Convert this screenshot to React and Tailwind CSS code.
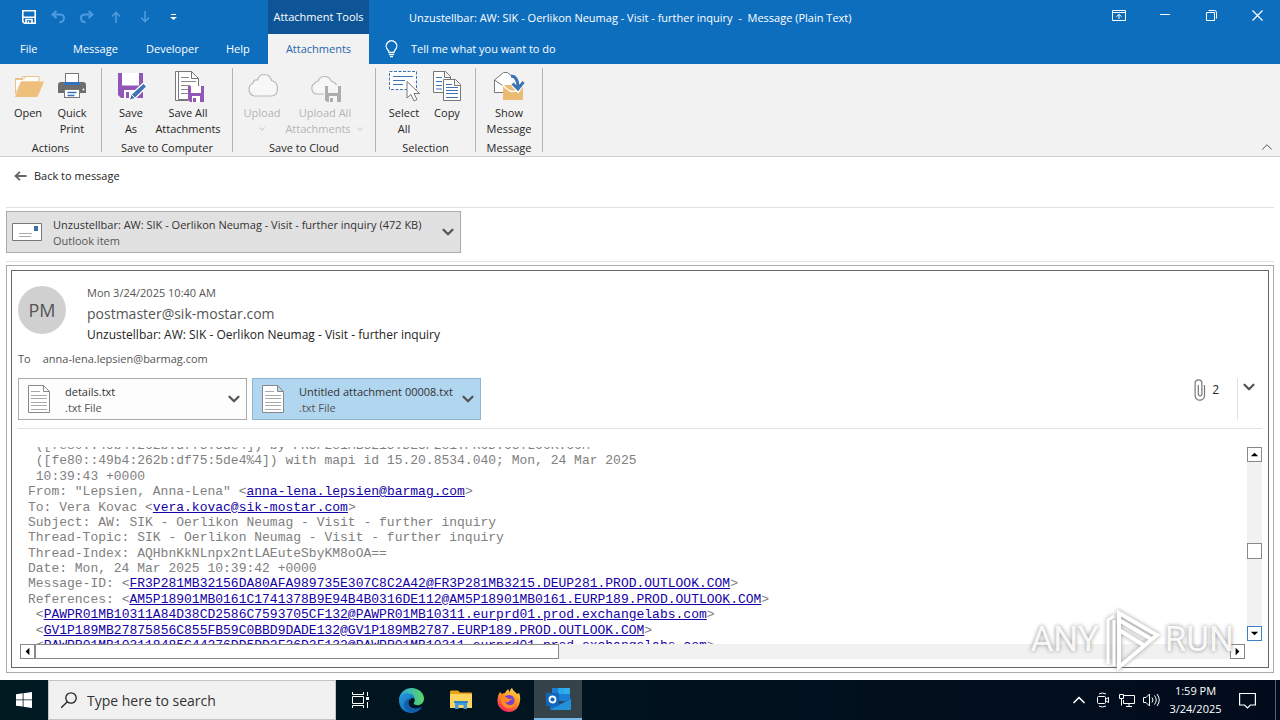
import { ChevronDown, ChevronUp } from "lucide-react";

const SaveIcon = () => (
  <svg width="14" height="14" viewBox="0 0 14 14" fill="none" stroke="white">
    <path d="M.8 .8h12.4v12.4H2.4L.8 11.6z" strokeWidth="1.6" />
    <path d="M1 7.2h12M4 13V9.5h6V13" strokeWidth="1.6" />
    <path d="M6.5 11v2" />
  </svg>
);

const UndoIcon = () => (
  <svg width="14" height="14" viewBox="0 0 14 14" fill="none" stroke="currentColor" strokeWidth="2">
    <path d="M5.5 1L1.5 4.5l4 3.500M2 4.500h7c2.500 0 4 1.500 4 3.500s-1.500 4-4.500 4.500" />
  </svg>
);

const RedoIcon = () => (
  <svg width="14" height="14" viewBox="0 0 14 14" fill="none" stroke="currentColor" strokeWidth="2">
    <path d="M8.500 1l4 3.500-4 3.500M12 4.500H5C2.500 4.500 1 6 1 8s1.500 4 4.500 4.500" />
  </svg>
);

const UpIcon = () => (
  <svg width="10" height="12" viewBox="0 0 10 12" fill="none" stroke="currentColor" strokeWidth="1.6">
    <path d="M5 12V1.500M1 5.500l4-4 4 4" />
  </svg>
);

const DownIcon = () => (
  <svg width="10" height="12" viewBox="0 0 10 12" fill="none" stroke="currentColor" strokeWidth="1.6">
    <path d="M5 0v10.500M1 6.500l4 4 4-4" />
  </svg>
);

const OpenIcon = () => (
  <svg width="32" height="32" viewBox="0 0 32 32">
    <path d="M3.500 24V8.500h7V6.500h16V11" fill="#fff" stroke="#e8c48a" />
    <path d="M3.500 8v16L9 12h18V6.500H14l-3 3H3.500z" fill="#fdfdfd" stroke="#e8c48a" />
    <path d="M9.500 11.500H32L25.500 27H3z" fill="#eec07b" />
  </svg>
);

const PrintIcon = () => (
  <svg width="32" height="32" viewBox="0 0 32 32">
    <rect x="9.500" y="3.500" width="13" height="10" fill="#fff" stroke="#777" />
    <path d="M2 15q0-3 3-3h3v3h16v-3h3q3 0 3 3v8H2z" fill="#6d6d6d" />
    <rect x="8" y="12" width="16" height="3" fill="#3571ba" />
    <circle cx="27.500" cy="19.500" r="1" fill="#fff" />
    <rect x="8.500" y="19.500" width="15" height="8" fill="#fff" stroke="#777" />
    <path d="M11.500 22.500h9M11.500 25.500h7" stroke="#3571ba" strokeWidth="1.400" />
  </svg>
);

const SaveAsIcon = () => (
  <svg width="32" height="32" viewBox="0 0 32 32">
    <path d="M3 3h25v25H6l-3-3z" fill="#9256b8" />
    <path d="M7 3h17v12.500H7zM9 20h12v8H9z" fill="#fff" />
    <rect x="11" y="22" width="3" height="6" fill="#9256b8" />
    <path d="M14 30.500l2-6L28.500 13l3.500 3.500L20 28.500z" fill="#3f74b4" stroke="#fff" strokeWidth="1.300" />
    <path d="M17 25l3 3" stroke="#fff" />
  </svg>
);

const SaveAllIcon = () => (
  <svg width="32" height="32" viewBox="0 0 32 32">
    <path d="M16 30.500H3.500V1.500h12" fill="#fff" stroke="#777" />
    <path d="M6.500 29.500v-28h13l7 7v21z" fill="#fff" stroke="#777" />
    <path d="M19.500 1.500v7h7" fill="none" stroke="#777" />
    <path d="M9 7.500h8M9 11.500h15M9 15.500h9M9 19.500h7M9 23.500h7" stroke="#8a8a8a" />
    <path d="M16 16h16v16H18l-2-2z" fill="#9256b8" />
    <path d="M19 16h10v7H19zM20 26h8v6h-8z" fill="#fff" />
    <rect x="21" y="28" width="3" height="4" fill="#9256b8" />
  </svg>
);

const CloudIcon = () => (
  <svg width="32" height="32" viewBox="0 0 32 32">
    <path d="M8 26a7 7 0 0 1-1-13q1-4 4.500-3Q13 4.500 18 4.500q6 0 7.500 6 6 1.500 6 8Q31.500 26 25 26z" fill="#f7f7f7" stroke="#b9b9b9" strokeWidth="1.200" />
  </svg>
);

const CloudAllIcon = () => (
  <svg width="32" height="32" viewBox="0 0 32 32">
    <path d="M15 24H7a6 6 0 0 1-1-11q1-2 3.500-2 1-4.500 6-4.500t7 5q3.500.500 5 3.500" fill="#f7f7f7" stroke="#b9b9b9" strokeWidth="1.200" />
    <path d="M16 16h16v16H18l-2-2z" fill="#adadad" />
    <path d="M19 16h10v7H19zM20 26h8v6h-8z" fill="#f5f5f5" />
    <rect x="21" y="28" width="3" height="4" fill="#adadad" />
  </svg>
);

const SelectIcon = () => (
  <svg width="32" height="32" viewBox="0 0 32 32">
    <rect x="1.500" y="1.500" width="27" height="18" fill="#fff" stroke="#3f74b4" strokeDasharray="3 1.500" />
    <path d="M5 6.500h20M5 10.500h12M5 14.500h10" stroke="#3f74b4" />
    <path d="M19 11.500V28l4-3.500 3 6.500 3-1.500-3-6h5.500z" fill="#fff" stroke="#777" />
  </svg>
);

const CopyIcon = () => (
  <svg width="32" height="32" viewBox="0 0 32 32" fill="#fff" stroke="#777">
    <path d="M2.500 1.500h12l5 5v16h-17zM13.500 1.500v6h6" />
    <path d="M5 7.500h6M5 11.500h6M5 15.500h6M5 19h6" stroke="#3f74b4" />
    <path d="M12.500 9.500h12l5 5v16h-17zM23.500 9.500v6h6" />
    <path d="M15 14.500h6M15 17.500h12M15 20.500h12M15 23.500h12M15 27.500h12" stroke="#3f74b4" />
  </svg>
);

const ShowIcon = () => (
  <svg width="32" height="32" viewBox="0 0 32 32">
    <path d="M1.500 22.500V10l9-7.500h4L22 9v13.500z" fill="#fff" stroke="#777" />
    <path d="M1.500 10l8 5.500" stroke="#777" fill="none" />
    <path d="M10 15h20v15H10z" fill="#ebbb73" />
    <path d="M10 15q10 13 20 0" fill="none" stroke="#fff" strokeWidth="1.300" />
    <path d="M18 6q7 0 7 13M20 14l5 5.500 5-7" fill="none" stroke="#fff" strokeWidth="5" />
    <path d="M18 6q7 0 7 12M19.500 13.500l5.500 5.500 5.500-7" fill="none" stroke="#3f74b4" strokeWidth="3" />
  </svg>
);

const groups = [
  { label: "Actions", pad: "pl-[6px] pr-[7px]", items: [
    { icon: OpenIcon, lines: ["Open"], width: "w-[44px]" },
    { icon: PrintIcon, lines: ["Quick", "Print"], width: "w-[44px]" },
  ] },
  { label: "Save to Computer", pad: "pl-[7px] pr-[9px]", items: [
    { icon: SaveAsIcon, lines: ["Save", "As"], width: "w-[44px]" },
    { icon: SaveAllIcon, lines: ["Save All", "Attachments"], width: "w-[70px]" },
  ] },
  { label: "Save to Cloud", pad: "px-[8px]", disabled: true, items: [
    { icon: CloudIcon, lines: ["Upload", ""], width: "w-[42px]", arrow: true },
    { icon: CloudAllIcon, lines: ["Upload All", "Attachments"], width: "w-[84px]", arrow: true },
  ] },
  { label: "Selection", pad: "pl-[6px] pr-[7px]", items: [
    { icon: SelectIcon, lines: ["Select", "All"], width: "w-[44px]" },
    { icon: CopyIcon, lines: ["Copy"], width: "w-[42px]" },
  ] },
  { label: "Message", pad: "", items: [
    { icon: ShowIcon, lines: ["Show", "Message"], width: "w-[66px]" },
  ] },
];

const RibbonGroup = ({ group }) => (
  <div className="flex">
    <div className="flex flex-col justify-between">
      <div className={`flex pt-[2px] ${group.pad}`}>
        {group.items.map(({ icon: Icon, lines, width, arrow }) => (
          <button key={lines[0]} disabled={group.disabled}
            className={`flex flex-col items-center gap-[3px] leading-4 whitespace-nowrap disabled:text-[#b5b5b5] ${width}`}>
            <Icon />
            <span className="flex flex-col items-center">
              <span>{lines[0]}</span>
              {lines.length > 1 && (
                <span className="flex h-4 items-center gap-1">
                  {lines[1]}
                  {arrow && <ChevronDown size={10} />}
                </span>
              )}
            </span>
          </button>
        ))}
      </div>
      <span className="text-center leading-4 whitespace-nowrap">{group.label}</span>
    </div>
    <div className="mb-1 w-px bg-[#b5b5b5]" />
  </div>
);

const headers = [
  { text: " ([fe80::49b4:262b:df75:5de4]) by FR3P281MB3215.DEUP281.PROD.OUTLOOK.COM" },
  { text: " ([fe80::49b4:262b:df75:5de4%4]) with mapi id 15.20.8534.040; Mon, 24 Mar 2025" },
  { text: " 10:39:43 +0000" },
  { text: 'From: "Lepsien, Anna-Lena" ', link: "anna-lena.lepsien@barmag.com" },
  { text: "To: Vera Kovac ", link: "vera.kovac@sik-mostar.com" },
  { text: "Subject: AW: SIK - Oerlikon Neumag - Visit - further inquiry" },
  { text: "Thread-Topic: SIK - Oerlikon Neumag - Visit - further inquiry" },
  { text: "Thread-Index: AQHbnKkNLnpx2ntLAEuteSbyKM8oOA==" },
  { text: "Date: Mon, 24 Mar 2025 10:39:42 +0000" },
  { text: "Message-ID: ", link: "FR3P281MB32156DA80AFA989735E307C8C2A42@FR3P281MB3215.DEUP281.PROD.OUTLOOK.COM" },
  { text: "References: ", link: "AM5P18901MB0161C1741378B9E94B4B0316DE112@AM5P18901MB0161.EURP189.PROD.OUTLOOK.COM" },
  { text: " ", link: "PAWPR01MB10311A84D38CD2586C7593705CF132@PAWPR01MB10311.eurprd01.prod.exchangelabs.com" },
  { text: " ", link: "GV1P189MB27875856C855FB59C0BBD9DADE132@GV1P189MB2787.EURP189.PROD.OUTLOOK.COM" },
  { text: " ", link: "PAWPR01MB103118485C44276DD5DD2F26D2F132@PAWPR01MB10311.eurprd01.prod.exchangelabs.com" },
];

const TextFileIcon = () => (
  <svg width="22" height="28" viewBox="0 0 22 28" fill="#fff" stroke="#888">
    <path d="M.5 .5h15l6 6v21H.5zM15.500 .5v6h6" />
    <path d="M3 6.500h9M3 10.500h16M3 13.500h16M3 17.500h16M3 20.500h16M3 24.500h16" stroke="#aaa" />
  </svg>
);

const Attachment = ({ name, selected }) => (
  <button className={`flex h-[42px] w-[229px] items-center border text-left leading-4 whitespace-nowrap ${selected ? "border-[#8fb4cf] bg-[#b1d6f0]" : "border-[#ababab] bg-[#fdfdfd]"}`}>
    <span className="mr-[15px] ml-[9px]"><TextFileIcon /></span>
    <span className="flex-1 pt-[2px] text-[#333]">
      <span className="block">{name}</span>
      <span className="block text-[#555]">.txt File</span>
    </span>
    <ChevronDown size={18} strokeWidth={3} className="mr-[3px] shrink-0 text-[#555]" />
  </button>
);

const arrows = {
  up: "M3 9h8L7 5z",
  down: "M3 5h8L7 9z",
  left: "M9 3v8L5 7z",
  right: "M5 3v8l4-4z",
};

const ScrollButton = ({ dir, active }) => (
  <button aria-label={`Scroll ${dir}`} className={`flex size-[15px] shrink-0 items-center justify-center border bg-white ${active ? "border-[#3f7fc4]" : "border-[#888]"}`}>
    <svg width="13" height="13" viewBox="0 0 14 14"><path d={arrows[dir]} /></svg>
  </button>
);

const Watermark = () => (
  <div className="pointer-events-none absolute right-[34px] bottom-[-6px] flex items-center gap-[5px] font-['Roboto',sans-serif] text-[35px] leading-[66px] text-white/90 [text-shadow:0_0_4px_#888]">
    <span>ANY</span>
    <svg width="56" height="64" viewBox="0 0 56 64" fill="none" stroke="#fff" strokeWidth="4" className="drop-shadow-[0_0_2px_#999]">
      <path d="M15 5L53 27 15 59zM15 12l32 19M15 22l26 16" />
      <path d="M10 8l-6 4v44M10 12v46" strokeWidth="3" />
    </svg>
    <span>RUN</span>
  </div>
);

const EdgeIcon = () => (
  <svg width="25" height="25" viewBox="0 0 24 24">
    <defs>
      <linearGradient id="edgeTop" x1="0" x2="1"><stop offset="0" stopColor="#2aa5e0" /><stop offset="1" stopColor="#5bd668" /></linearGradient>
      <linearGradient id="edgeLow" x1="0" x2="1" y2="1"><stop offset="0" stopColor="#249fe0" /><stop offset="1" stopColor="#0c4f9e" /></linearGradient>
    </defs>
    <path d="M0 11C1 4 6 0 12 0c7 0 12 5 12 10 0 4-3 6.500-6.500 6.500-2.500 0-4-1-3-2.500 2-3-.5-6-4-6C5 8 1 10 0 11z" fill="url(#edgeTop)" />
    <path d="M0 12c0-5 4-7 8-7 5 0 7 3 7 5-4-1.500-6 1-6 4 0 5 6 8 13 4-2 4-6 6-10 6C5 24 0 19 0 12z" fill="url(#edgeLow)" />
    <path d="M9 13c-1 5 5 9 12.500 5.500C16 26 4 23 5 15c.5-3 4-5 7-4.500-2 .5-3 1.500-3 2.500z" fill="#135eac" />
  </svg>
);

const FolderIcon = () => (
  <svg width="22" height="20" viewBox="0 0 22 20">
    <path d="M0 2q0-1.500 1-1.500h7l2 2h11q1 0 1 1V17H0z" fill="#e8a317" />
    <path d="M0 4h22v14H0z" fill="#fcd462" />
    <path d="M5 11h12v8h-3.500v-4h-5v4H5z" fill="#3f9bdc" />
    <path d="M4 11h14v2H4z" fill="#2b85c9" />
  </svg>
);

const FirefoxIcon = () => (
  <svg width="24" height="24" viewBox="0 0 24 24">
    <defs>
      <linearGradient id="fox" x1=".8" y1="0" x2=".3" y2="1"><stop offset="0" stopColor="#ffe14a" /><stop offset=".5" stopColor="#ff8a28" /><stop offset="1" stopColor="#f5205e" /></linearGradient>
    </defs>
    <path d="M3 4l2 2c1-.5 2-1 3-1 1-2 2-3 3.500-4 0 1.500.500 2 1.500 3 0-2 .5-3 2-4 1 3 4 4 5 6l2-1c1 2 1.500 5 1 8C22 20 17.500 24 12 24S1 20 .5 14C.3 10 1 7 3 4z" fill="url(#fox)" />
    <circle cx="12" cy="12.500" r="5.500" fill="#7a3fd0" />
    <path d="M4 10c3-2 6-1 8 1l4-.5c-1 1-2 1.500-3.500 2 0 2-3 2-4.500 1 1 3 5 5 9 2 1-1 1-3 .5-5 2 3 2 9-5 10-5 0-9-4-8.500-10.500z" fill="#ff8c22" />
  </svg>
);

const OutlookIcon = () => (
  <svg width="25" height="24" viewBox="0 0 25 24">
    <rect x="6" y="1" width="18" height="13" fill="#1a7fd4" />
    <path d="M12 1h6v6h-6z" fill="#28a8ea" />
    <path d="M18 1h6v6h-6z" fill="#50d9ff" opacity=".5" />
    <path d="M4 12l10 5 11-6v12H4z" fill="#1270bf" />
    <path d="M4 23l21-11v11z" fill="#2590d8" />
    <rect y="6" width="13" height="13" rx="1" fill="#0f66bd" />
    <circle cx="6.500" cy="12.500" r="3" fill="none" stroke="#fff" strokeWidth="1.800" />
  </svg>
);

const TitleBar = () => (
  <div className="flex h-[34px] items-stretch bg-[#0e6ebe] text-white">
    <div className="flex w-[268px] items-center pl-[22px] text-[#4f9add]">
      <button aria-label="Save" className="mr-[15px]"><SaveIcon /></button>
      <button aria-label="Undo" className="mr-[15px]"><UndoIcon /></button>
      <button aria-label="Redo" className="mr-[17px]"><RedoIcon /></button>
      <button aria-label="Previous" className="mr-[19px]"><UpIcon /></button>
      <button aria-label="Next" className="mr-[20px]"><DownIcon /></button>
      <button aria-label="Customize toolbar">
        <svg width="7" height="8" viewBox="0 0 7 8" fill="white"><path d="M1 1h5v1H1zM0 4h7L3.500 7z" /></svg>
      </button>
    </div>
    <div className="flex w-[101px] items-center justify-center bg-[#0d5596] whitespace-nowrap">Attachment Tools</div>
    <h1 className="ml-10 flex-1 leading-9 whitespace-pre">Unzustellbar: AW: SIK - Oerlikon Neumag - Visit - further inquiry  -  Message (Plain Text)</h1>
    <div className="flex h-[30px] items-center">
      <button aria-label="Ribbon display" className="flex w-[46px] justify-center">
        <svg width="14" height="11" viewBox="0 0 14 11" fill="none" stroke="white"><path d="M.5 .5h13v10H.5zM1 2.500h12M7 9V4.500M4.500 6.500L7 4.500l2.500 2" /></svg>
      </button>
      <button aria-label="Minimize" className="flex w-[46px] justify-center">
        <svg width="10" height="10" viewBox="0 0 10 10" stroke="white"><path d="M0 4.500h10" /></svg>
      </button>
      <button aria-label="Restore" className="flex w-[46px] justify-center">
        <svg width="11" height="11" viewBox="0 0 11 11" fill="none" stroke="white"><path d="M.5 2.500h8v8h-8zM2.500 .5h6q2 0 2 2v6" /></svg>
      </button>
      <button aria-label="Close" className="flex w-[46px] justify-center">
        <svg width="11" height="11" viewBox="0 0 11 11" stroke="white" strokeWidth="1.200"><path d="M.5 .5l10 10M10.500 .5l-10 10" /></svg>
      </button>
    </div>
  </div>
);

const Tabs = () => (
  <nav className="flex h-[30px] items-center bg-[#0e6ebe] text-white">
    <a href="#file" className="w-[53px] pl-[20px]">File</a>
    <a href="#message" className="w-[73px] pl-[20px]">Message</a>
    <a href="#developer" className="w-[80px] pl-[20px]">Developer</a>
    <a href="#help" className="w-[62px] pl-[20px]">Help</a>
    <a href="#attachments" className="flex h-full w-[101px] items-center justify-center bg-[#f2f2f2] text-[#1f66ad]">Attachments</a>
    <label htmlFor="tellme" className="mr-[13px] ml-[16px]">
      <svg width="13" height="18" viewBox="0 0 13 18" fill="none" stroke="white" strokeWidth="1.300">
        <path d="M4 12.500Q4 11 2.500 9.500A5.300 5.300 0 1 1 10.500 9.500Q9 11 9 12.500zM4 14.700h5M5 16.700h3" />
      </svg>
    </label>
    <input id="tellme" aria-label="Tell me what you want to do" placeholder="Tell me what you want to do" className="w-[220px] bg-transparent outline-none placeholder:text-white" />
  </nav>
);

const Taskbar = () => (
  <footer className="flex h-10 shrink-0 items-stretch bg-linear-to-r from-[#001a22] to-[#020b1c] text-white">
    <button aria-label="Start" className="flex w-12 items-center justify-center">
      <svg width="16" height="16" viewBox="0 0 16 16" fill="white"><path d="M0 2.300L6.700 1.300v6.200H0zM7.500 1.200L16 0v7.500H7.500zM0 8.300h6.700v6.300L0 13.700zM7.500 8.300H16V16l-8.500-1.200z" /></svg>
    </button>
    <div className="flex w-[288px] items-center border border-[#c4c4c4] bg-[#f1f1f1] pl-[12px]">
      <svg width="16" height="16" viewBox="0 0 16 16" fill="none" stroke="#222" strokeWidth="1.300"><circle cx="10" cy="6" r="5.200" /><path d="M6.300 9.700L0 16" /></svg>
      <input aria-label="Type here to search" placeholder="Type here to search" className="ml-[10px] w-[200px] bg-transparent text-[14px] outline-none placeholder:text-[#333]" />
    </div>
    <button aria-label="Task view" className="flex w-12 items-center justify-center">
      <svg width="17" height="16" viewBox="0 0 17 16" fill="none" stroke="white"><path d="M.5 0v2.500h11V0M.5 4.500h11v7H.5zM.5 16v-2.500h11V16M15.500 0v4M15.500 10v6" /><path d="M14 5h3v3h-3z" fill="white" stroke="none" /></svg>
    </button>
    <button aria-label="Edge" className="flex w-[54px] items-center justify-center"><EdgeIcon /></button>
    <button aria-label="File Explorer" className="flex w-[45px] items-center justify-center"><FolderIcon /></button>
    <button aria-label="Firefox" className="flex w-[51px] items-center justify-center"><FirefoxIcon /></button>
    <button aria-label="Outlook" className="flex w-12 items-center justify-center border-b-2 border-[#76b9ed] bg-[#35434b]"><OutlookIcon /></button>
    <div className="flex-1" />
    <div className="flex items-center gap-2 leading-[18px]">
      <ChevronUp size={20} strokeWidth={2} className="-mr-[2px]" />
      <svg width="16" height="16" viewBox="0 0 16 16" fill="none" stroke="white"><rect x="2.500" y="4.500" width="8" height="7" rx="1" /><path d="M11 7l2.500-1.500v5L11 9M4 2q3-2 7 0M4 14q3 2 7 0" /></svg>
      <svg width="16" height="16" viewBox="0 0 16 16" fill="none" stroke="white"><path d="M5 3.500h10.500v8h-11V8M7 14.500h6M10 12v2.500M.5 2.500h4v4h-4zM2.500 6.500v7" /></svg>
      <svg width="17" height="16" viewBox="0 0 17 16" fill="none" stroke="white"><path d="M.5 5.500h2.500L6.500 2v12L3 10.500H.5zM9 5.500q2 2.500 0 5M11.500 3.500q3.500 4.500 0 9M14 2q4.500 6 0 12" /></svg>
      <time className="w-[55px] text-center whitespace-nowrap">1:59 PM<br />3/24/2025</time>
      <button aria-label="Notifications" className="mr-[19px] ml-[8px]">
        <svg width="17" height="17" viewBox="0 0 17 17" fill="none" stroke="white" strokeWidth="1.200"><path d="M.6 1.500h15.800v11.500h-5L8.500 16l-3-3H.6z" /></svg>
      </button>
    </div>
    <div className="mr-1 w-px bg-[#59636d]" />
  </footer>
);

export default function App() {
  return (
    <div className="flex h-screen flex-col overflow-hidden bg-white font-['Open_Sans',sans-serif] text-[11px] text-[#262626]">
      <TitleBar />
      <Tabs />
      <div className="flex h-[93px] shrink-0 items-stretch border-b border-[#cfcfcf] bg-[#f2f2f2] pt-1">
        {groups.map((group) => <RibbonGroup key={group.label} group={group} />)}
        <button aria-label="Collapse ribbon" className="mt-auto mr-[4px] ml-auto"><ChevronUp size={18} strokeWidth={1} /></button>
      </div>

      <main className="flex min-h-0 flex-1 flex-col px-[6px] pb-[7px]">
        <div className="h-[51px] shrink-0 border-b border-[#e1e1e1] pt-[10px] pl-[8px]">
          <a href="#back" className="flex items-center gap-[7px] leading-[18px]">
            <svg width="13" height="10" viewBox="0 0 13 10" fill="none" stroke="#666" strokeWidth="1.800"><path d="M12.500 5H2M6 .8L1.500 5 6 9.200" /></svg>
            Back to message
          </a>
        </div>
        <div className="shrink-0 border-b border-[#e1e1e1] pt-[3px] pb-[8px]">
          <button className="flex h-[42px] w-[455px] items-center border border-[#ababab] bg-[#e1e1e1] text-left leading-4 whitespace-nowrap">
            <svg width="30" height="18" viewBox="0 0 30 18" className="ml-[5px] shrink-0"><path d="M.5 .5h29v17H.5z" fill="#fff" stroke="#777" /><path d="M22 3h4v5h-4z" fill="#3f6da5" /><path d="M7 10.500h13M7 13.500h12" stroke="#aaa" /></svg>
            <span className="ml-[11px] flex-1 pt-[2px]">
              <span className="block text-[#333]">Unzustellbar: AW: SIK - Oerlikon Neumag - Visit - further inquiry (472 KB)</span>
              <span className="block text-[#555]">Outlook item</span>
            </span>
            <ChevronDown size={18} strokeWidth={3} className="mr-[3px] shrink-0 text-[#555]" />
          </button>
        </div>

        <div className="mt-[3px] flex min-h-0 flex-1 border border-[#ababab] p-1">
          <article className="relative flex min-w-0 flex-1 flex-col border border-[#666] px-[6px] pb-[8px]">
            <header className="flex shrink-0 gap-[21px] pt-[12px]">
              <div className="mt-[3px] flex size-12 items-center justify-center rounded-full bg-[#d0d0d0] text-[18px] text-[#555]">PM</div>
              <div className="text-[#555]">
                <p className="leading-5">Mon 3/24/2025 10:40 AM</p>
                <p className="text-[14px] leading-[22px]">postmaster@sik-mostar.com</p>
                <p className="text-[12px] leading-5 text-[#222]">Unzustellbar: AW: SIK - Oerlikon Neumag - Visit - further inquiry</p>
              </div>
            </header>
            <p className="mt-[5px] flex shrink-0 gap-[12px] leading-[18px] text-[#555]"><span>To</span><span>anna-lena.lepsien@barmag.com</span></p>
            <div className="mt-[10px] flex shrink-0 gap-[5px] border-b border-[#e1e1e1] pb-[8px]">
              <Attachment name="details.txt" />
              <Attachment name="Untitled attachment 00008.txt" selected />
              <div className="ml-auto flex text-[12px]">
                <svg width="12" height="22" viewBox="0 0 12 22" fill="none" stroke="#777" strokeWidth="1.200" className="mt-[1px]"><path d="M10.500 6v10.500a4.700 4.700 0 0 1-9.400 0V4.200a3.400 3.400 0 0 1 6.800 0v11.300a1.900 1.900 0 0 1-3.600 0V6" /></svg>
                <span className="mx-[6px] mt-[3px] leading-[18px]">2</span>
                <button aria-label="Expand" className="ml-[12px] flex border-l border-[#e1e1e1] pr-[4px] pl-[2px]"><ChevronDown size={18} strokeWidth={3} className="text-[#555]" /></button>
              </div>
            </div>
            <div className="mt-[18px] flex min-h-0 flex-1 gap-[2px]">
              <div className="flex min-w-0 flex-1 flex-col">
                <div className="flex min-h-0 flex-1 flex-col justify-center overflow-hidden pl-[10px]">
                  <div className="flex h-[215px] shrink-0 flex-col justify-between font-['Liberation_Mono',monospace] text-[13px] leading-[15px] whitespace-pre text-[#808080]">
                    {headers.map(({ text, link }) => (
                      <p key={text + link}>
                        {text}
                        {link && <>&lt;<a href={`mailto:${link}`} className="text-[#1400a8] underline">{link}</a>&gt;</>}
                      </p>
                    ))}
                  </div>
                </div>
                <div className="ml-[2px] flex bg-[#f1f1f1]">
                  <ScrollButton dir="left" />
                  <div className="w-[524px] border border-[#888] bg-white" />
                  <div className="flex-1" />
                  <ScrollButton dir="right" />
                </div>
              </div>
              <div className="mb-[18px] flex flex-col bg-[#f1f1f1]">
                <ScrollButton dir="up" />
                <div className="grow-6" />
                <div className="h-4 border border-[#888] bg-white" />
                <div className="grow-5" />
                <ScrollButton dir="down" active />
              </div>
            </div>
            <Watermark />
          </article>
        </div>
      </main>
      <Taskbar />
    </div>
  );
}
